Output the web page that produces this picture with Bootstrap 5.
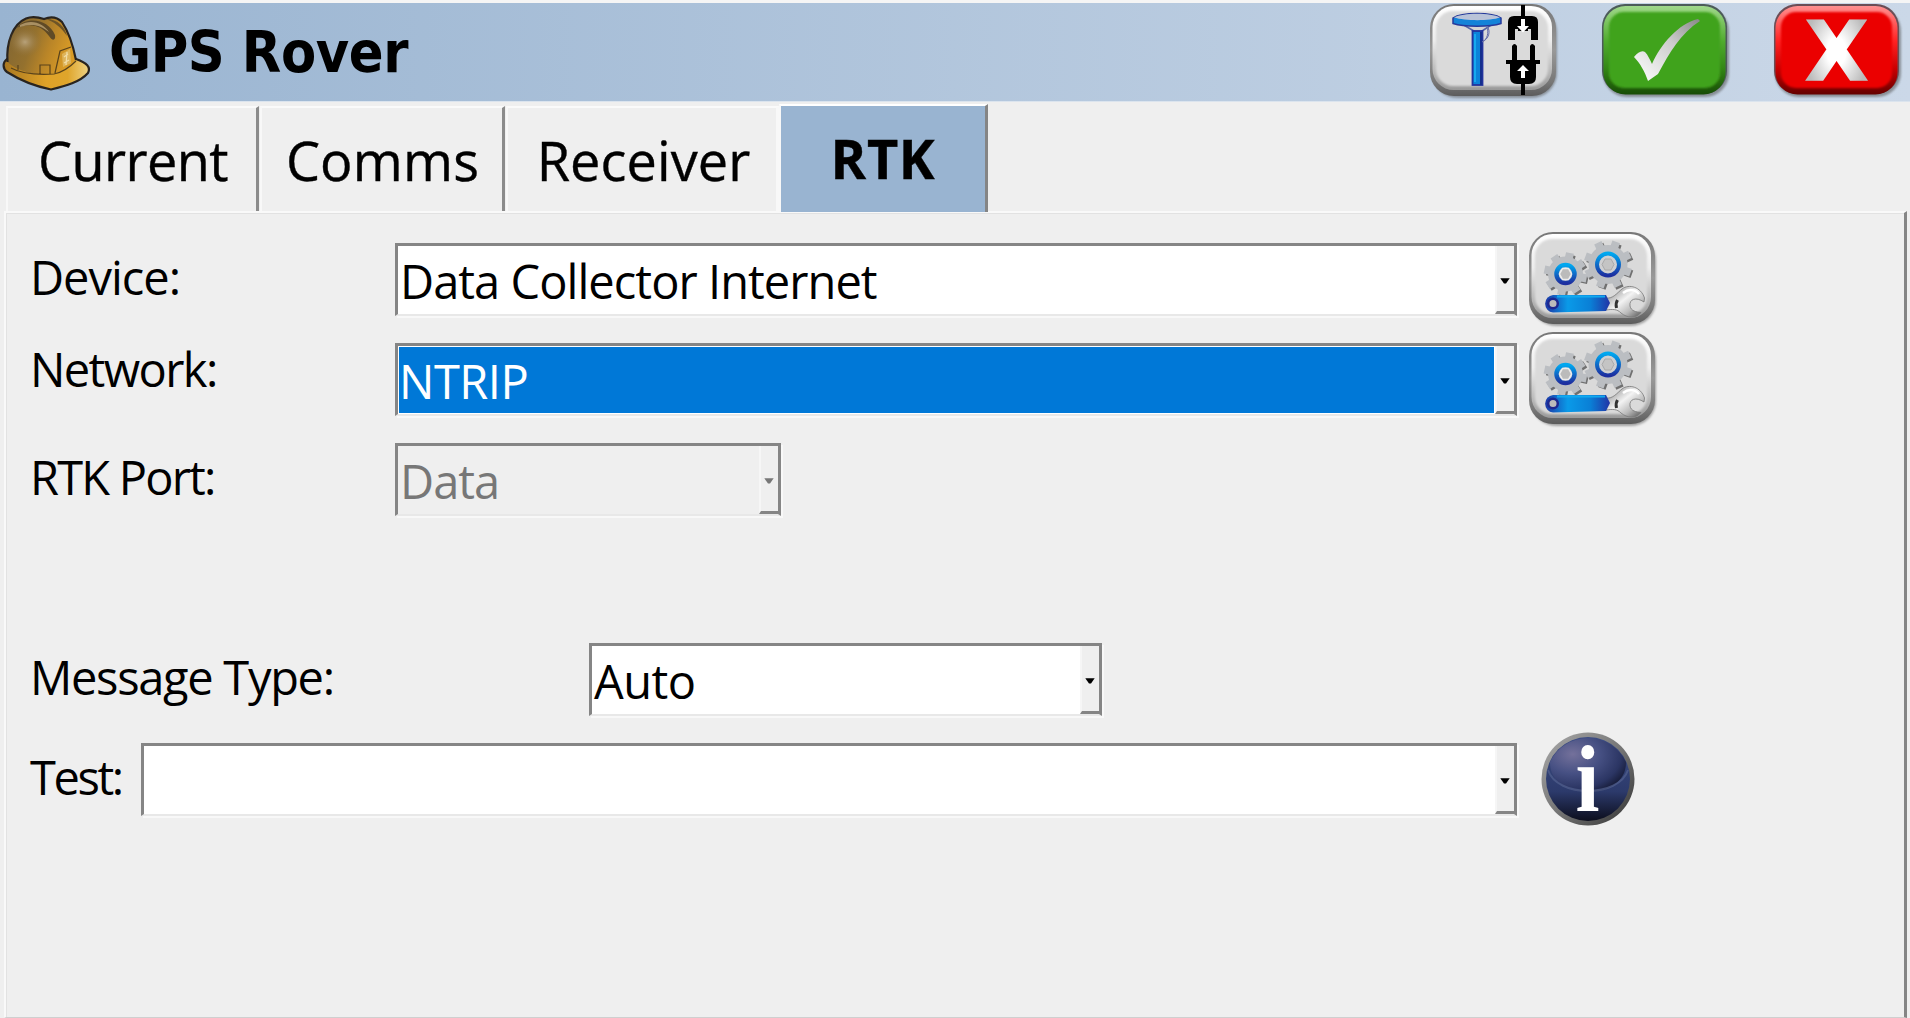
<!DOCTYPE html>
<html lang="en">
<head>
<meta charset="utf-8">
<title>GPS Rover</title>
<meta name="viewport" content="width=device-width, initial-scale=1">
<link href="https://cdn.jsdelivr.net/npm/bootstrap@5.3.0/dist/css/bootstrap.min.css" rel="stylesheet">
<style>
body{background:#efefef;color:#000;font-family:"Open Sans","Noto Sans",sans-serif;height:1018px;overflow:hidden;border-top:3px solid #f5f5f5}
svg{display:block;flex:none;overflow:visible}
.titlebar{height:98px;background:linear-gradient(90deg,#99b4d1,#cbd8e8);box-shadow:0 1px 0 #dbe4ee;padding:0 8px 0 0}
.titlebar h1{font:bold 57px/76px "DejaVu Sans Condensed","DejaVu Sans",sans-serif;font-stretch:condensed;margin:11px auto 0 16px;letter-spacing:-.4px}
.titlebar .btn,.fieldrow .btn{border:0;border-radius:24px}
.title-actions{gap:44px;margin-top:1px}
.tabstrip{height:110px;padding:5px 0 0 6px}
.tabstrip .nav-link{height:105px;margin-right:1px;padding:0;border:0;border-top:2px solid #fafafa;border-left:2px solid #f8f8f8;border-right:3px solid #8b8b8b;border-radius:0;color:#000;font-size:54px;line-height:104px;text-align:center;-webkit-text-stroke:.4px #000}
.tabstrip .flat{border-right-color:#f8f8f8;margin-right:0}
.tabstrip .nav-link.active{background:#99b4d1;font-weight:700;height:108px;margin-top:-2px;line-height:105px;border-right-color:#858585;border-top-color:#fff;letter-spacing:.7px}
.tabstrip .t1{width:253px;letter-spacing:-.6px;padding-left:2px}.tabstrip .t2{width:245px;letter-spacing:.2px;padding-left:1px}.tabstrip .t3{width:273px;letter-spacing:.1px;padding-left:3px}.t4{width:209px}
.panel{height:807px;margin:0 3px 0 4px;padding:16px 0 0 24px;border-top:2px solid #f9f9f9;border-left:2px solid #f9f9f9;border-right:3px solid #858585;border-bottom:1px solid #cfcfcf;box-shadow:inset 1px 1px #e2e2e2}
.fieldrow{height:100px}
.fieldrow label{font-size:47px;line-height:64px;margin-top:16px;white-space:nowrap;flex:none}
.fieldrow .raised{margin-top:8px}
.w-label{width:365px}.w-wide{width:559px}.w-short{width:111px}
.combo{height:73px;margin-top:14px;border:3px solid #858585;border-bottom:2px solid #e8e8e8;background:#fff;box-shadow:2px 2px 0 #f8f8f8;font-size:47px;line-height:71px;flex:none;white-space:nowrap}
.combo .val{flex:1 1 auto;padding-left:2px}
.combo .val.chosen{background:#0078d7;color:#fff;margin:1px;padding-left:0;line-height:69px;height:66px}
.combo .drop{width:19px;height:68px;flex:none;background:#efefef;border-left:2px solid #f6f6f6;border-bottom:3px solid #858585;padding:32px 0 0 3px}
.combo.off{background:#efefef;color:#777}
.c-full{width:1122px}.c-port{width:386px}.c-msg{width:513px}.c-test{width:1376px}
.ls-dev{letter-spacing:-1px}.ls-net{letter-spacing:-1.6px}.ls-port{letter-spacing:-1.8px}.ls-msg{letter-spacing:-1.3px}.ls-test{letter-spacing:-2.4px}
.ls-data{letter-spacing:-.95px}.ls-ntrip{letter-spacing:-.5px}
</style>
<script src="https://cdn.jsdelivr.net/npm/bootstrap@5.3.0/dist/js/bootstrap.bundle.min.js"></script>
</head>
<body>
<svg width="0" height="0" class="position-absolute" aria-hidden="true">
<defs>
<linearGradient id="rim" x1="0" y1="0" x2="0" y2="1"><stop offset="0" stop-color="#777"/><stop offset=".5" stop-color="#999"/><stop offset=".85" stop-color="#777"/><stop offset="1" stop-color="#5c5c5c"/></linearGradient>
<linearGradient id="hi" x1="0" y1="0" x2="0" y2="1"><stop offset="0" stop-color="#fff"/><stop offset=".4" stop-color="#eee"/><stop offset="1" stop-color="#999"/></linearGradient>
<linearGradient id="blue" x1="0" y1="0" x2="0" y2="1"><stop offset="0" stop-color="#00a8f0"/><stop offset="1" stop-color="#1d2fa0"/></linearGradient>
<linearGradient id="bar" x1="0" y1="0" x2="1" y2="0"><stop offset="0" stop-color="#1c36a5"/><stop offset=".35" stop-color="#0a9ae8"/><stop offset=".7" stop-color="#0a7fd6"/><stop offset="1" stop-color="#2134a6"/></linearGradient>
<linearGradient id="steel" x1="0" y1="0" x2="1" y2="1"><stop offset="0" stop-color="#777"/><stop offset=".45" stop-color="#f3f3f3"/><stop offset=".7" stop-color="#bbb"/><stop offset="1" stop-color="#444"/></linearGradient>
<filter id="b1" x="-20%" y="-20%" width="140%" height="140%"><feGaussianBlur stdDeviation="1.2"/></filter>
<symbol id="plate" viewBox="0 0 128 94" overflow="visible">
<rect x="2" y="3" width="125" height="91" rx="25" fill="#555" opacity=".5" filter="url(#b1)"/>
<rect x="0" y="0" width="126" height="92" rx="24" fill="url(#rim)"/>
<rect x="2.500" y="2" width="119.500" height="84" rx="21" fill="url(#hi)"/>
<rect x="6" y="7" width="112" height="75" rx="17" fill="#dadada" filter="url(#b1)"/>
</symbol>
<symbol id="tools" viewBox="0 0 128 94" overflow="visible">
<use href="#plate" width="128" height="94"/>
<g transform="translate(36.500 42)">
<g transform="translate(1.800 1.800) rotate(12)" stroke="#707070" stroke-width="8"><path d="M0-21V21M-21 0H21M-15-15L15 15M15-15L-15 15"/></g>
<path d="M0-21.500V21.500M-21.500 0H21.500M-15-15L15 15M15-15L-15 15" transform="rotate(12)" stroke="#bbbec2" stroke-width="8"/>
<circle r="17.500" fill="#bbbec2"/><circle r="9" fill="#d4d4d4" stroke="url(#blue)" stroke-width="4.500"/><path d="M-3-5.500H3L6 0L3 5.500H-3L-6 0Z" fill="#bbb" stroke="#ececec" stroke-width="1.500"/></g>
<g transform="translate(79 32.500)">
<g transform="translate(1.800 1.800) rotate(20)" stroke="#707070" stroke-width="8"><path d="M0-23.500V23.500M-23.500 0H23.500M-17-17L17 17M17-17L-17 17"/></g>
<path d="M0-24V24M-24 0H24M-17-17L17 17M17-17L-17 17" transform="rotate(20)" stroke="#bbbec2" stroke-width="8"/>
<circle r="19.500" fill="#bbbec2"/><circle r="11" fill="#cfd0d2" stroke="url(#blue)" stroke-width="4"/><path d="M-3-5.500H3L6 0L3 5.500H-3L-6 0Z" fill="#c4c4c4" stroke="#aaa"/></g>
<path d="M77 66C84 67 88 61 93 57C100 51.500 112 55 115.500 66L115 70C107 64.500 100 67 101 74C102 79 107 80 112 80.500C107 87 98 86 92 81C88 77 84 77 77 78Z" fill="url(#steel)" stroke="#777" stroke-width=".8"/>
<path d="M94 61C99 57 106 57 110 62" stroke="#fff" stroke-width="2.500" fill="none"/>
<path d="M88.500 68C86.500 71 87 74 87.500 76" stroke="#333" stroke-width="3" fill="none"/>
<path d="M24 63H77L81 71L77 79L24 80.500A8.800 8.800 0 0 1 24 63Z" fill="url(#bar)"/>
<path d="M28 64.500H76" stroke="#11a9ef" stroke-width="2"/>
<circle cx="24" cy="71.500" r="4.800" fill="#bbb" stroke="#1d2890" stroke-width="2.500"/>
</symbol>
<symbol id="caret" viewBox="0 0 10 6"><path d="M.3.200H9.700L6 5.500H4Z" fill="currentColor"/></symbol>
</defs>
</svg>

<header class="titlebar d-flex align-items-start">
<svg width="93" height="98" viewBox="0 3 93 98">
<defs><linearGradient id="shell" x1="0" y1="0" x2="1" y2=".3"><stop offset="0" stop-color="#7f6433"/><stop offset=".45" stop-color="#94712e"/><stop offset=".7" stop-color="#b98528"/><stop offset="1" stop-color="#d99b26"/></linearGradient><radialGradient id="glow"><stop offset="0" stop-color="#b8a27a"/><stop offset="1" stop-color="#8f7039" stop-opacity="0"/></radialGradient><linearGradient id="brim"><stop offset="0" stop-color="#a87720"/><stop offset=".5" stop-color="#dfa228"/><stop offset=".75" stop-color="#dfa52b"/><stop offset="1" stop-color="#efd384"/></linearGradient></defs>
<path d="M7 59C2 63 3 69 7 72C18 79 34 86 51 89.500C66 86 80 82 88 73C91 67 87 63 76 59Z" fill="url(#brim)" stroke="#29241f" stroke-width="2.200"/>
<path d="M7.500 62C6 42 13 24 26 18.500C32 16 38 17 44 19C51 16 57 17 62 22C68 31 73 45 76 60C70 67 62 71 54 74C36 76 18 72 7.500 62Z" fill="url(#shell)"/>
<path d="M7.500 62C6 42 13 24 26 18.500C32 16 38 17 44 19C51 16 57 17 62 22C68 31 73 45 76 60" fill="none" stroke="#29241f" stroke-width="2.200"/>
<ellipse cx="25" cy="42" rx="17" ry="15" fill="url(#glow)"/>
<path d="M16 28C28 15 49 20 55 35C56 41 52 41 49 36C42 26 32 22 16 28Z" fill="#5f4a26"/><path d="M20 25C32 18 44 24 49 32C40 25 32 23 20 27Z" fill="#a99063"/>
<path d="M46 19C58 19 65 27 67 36C60 26 54 22 46 19Z" fill="#6d5427"/>
<path d="M18 65V70M40 74V65H50V74M55 73L60 51L71 47M11 68C22 74 38 75 54 74C64 72 70 67 76 61" fill="none" stroke="#5a431b" stroke-width="1.200"/>
<path d="M62 54L70 49L71 63L63 67Z" fill="#deb45a"/><path d="M64 57L68 54M64 63L69 60M67 52L66 65" stroke="#f1dca4" stroke-width="1.300"/>
</svg>
<h1>GPS Rover</h1>
<div class="title-actions d-flex">
<button class="btn p-0" aria-label="Receiver connection">
<svg width="128" height="94" viewBox="0 0 128 94"><use href="#plate" width="128" height="94"/>
<path d="M25 16L44 27V33H52V27L69 16Z" fill="#d4d4d4" stroke="#5866a4" stroke-width="1.500"/>
<path d="M23 14C32 8 62 8 71 14V19.500C60 23 34 23 23 19.500Z" fill="#1483d8" stroke="#263a9b" stroke-width="1.500"/><path d="M24 13.500C34 8.500 60 8.500 70 13.500C60 17 35 17 24 13.500Z" fill="#b9c3d8"/>
<rect x="42.500" y="27" width="10" height="54" fill="#0b82d9" stroke="#22329c" stroke-width="1.800"/><path d="M51 28V81" stroke="#142f8e" stroke-width="2"/><path d="M45 30V78" stroke="#16a9ef" stroke-width="2"/>
<path d="M53 37C57 36 59 29 57 22C61 27 59 35 52 38" fill="#dce3f0" stroke="#626ba6"/>
<path d="M93 1V13M93 77V91" stroke="#000" stroke-width="4"/>
<path d="M78 36V18Q78 12 84 12H102Q108 12 108 18V36H101V25H98V36H88V25H85V36Z"/><path d="M87 27H99V37H87Z" fill="#dadada"/><path d="M91 15H95V22H99L93 28.500L87 22H91Z" fill="#fff"/>
<path d="M82 42Q84.500 38 87 42V56H100V42Q102 38 105 42V56H110V60H106V73Q106 80 99 80H87Q80 80 80 73V60H76V56H82Z"/><path d="M91 74V67H87L93 61L99 67H95V74Z" fill="#fff"/>
</svg></button>
<button class="btn p-0" aria-label="Accept">
<svg width="128" height="94" viewBox="0 0 128 94"><defs><linearGradient id="gr" x1="0" y1="0" x2="0" y2="1"><stop offset="0" stop-color="#a0d88b"/><stop offset=".4" stop-color="#50ab2e"/><stop offset=".7" stop-color="#348816"/><stop offset="1" stop-color="#174c06"/></linearGradient><linearGradient id="tick" x1="1" y1="0" x2="0" y2="1"><stop offset="0" stop-color="#888"/><stop offset=".4" stop-color="#ccc"/><stop offset="1" stop-color="#fff"/></linearGradient></defs>
<rect x="1" y="3" width="126" height="90" rx="24" fill="#555" opacity=".55" filter="url(#b1)"/><rect width="125" height="90" rx="23" fill="#4c5b59"/><rect x="1.500" y="2" width="122" height="88.500" rx="22" fill="url(#gr)"/><rect x="7" y="8" width="111" height="76" rx="15" fill="#41a31b" filter="url(#b1)"/>
<path d="M32 53C36 48 40 46 43 48C46 51 48 56 50 60C59 40 76 20 96 15L98 17C78 30 68 48 56 70L46 77C43 68 38 59 32 53Z" fill="url(#tick)"/></svg></button>
<button class="btn p-0" aria-label="Cancel">
<svg width="128" height="94" viewBox="0 0 128 94"><defs><linearGradient id="rd" x1="0" y1="0" x2="0" y2="1"><stop offset="0" stop-color="#ff9090"/><stop offset=".4" stop-color="#f22"/><stop offset=".7" stop-color="#c00"/><stop offset="1" stop-color="#640000"/></linearGradient><radialGradient id="xf"><stop offset=".3" stop-color="#fff"/><stop offset="1" stop-color="#bbb"/></radialGradient></defs>
<rect x="1" y="3" width="126" height="90" rx="24" fill="#555" opacity=".55" filter="url(#b1)"/><rect width="125" height="90" rx="23" fill="#6b4d55"/><rect x="1.500" y="2" width="122" height="88.500" rx="22" fill="url(#rd)"/><rect x="7" y="8" width="111" height="76" rx="15" fill="#eb0000" filter="url(#b1)"/>
<text x="62.500" y="76" text-anchor="middle" font-family="DejaVu Sans" font-weight="700" font-size="82" fill="url(#xf)" stroke="url(#xf)" stroke-width="1.500">X</text></svg></button>
</div>
</header>

<nav class="tabstrip nav flex-nowrap">
<a class="nav-link t1">Current</a><a class="nav-link t2">Comms</a><a class="nav-link flat t3">Receiver</a><a class="nav-link active t4">RTK</a>
</nav>

<main class="panel">
<div class="fieldrow d-flex align-items-start">
<label class="w-label ls-dev">Device:</label>
<div class="combo c-full d-flex"><span class="val ls-data">Data Collector Internet</span><span class="drop"><svg width="10" height="6"><use href="#caret"/></svg></span></div>
<button class="btn p-0 ms-2" aria-label="Device settings"><svg class="ms-1 mt-1" width="128" height="94"><use href="#tools" y="-1"/></svg></button>
</div>
<div class="fieldrow d-flex align-items-start">
<label class="w-label raised ls-net">Network:</label>
<div class="combo c-full d-flex"><span class="val chosen ls-ntrip">NTRIP</span><span class="drop"><svg width="10" height="6"><use href="#caret"/></svg></span></div>
<button class="btn p-0 ms-2" aria-label="Network settings"><svg class="ms-1 mt-1" width="128" height="94"><use href="#tools" y="-1"/></svg></button>
</div>
<div class="fieldrow d-flex align-items-start">
<label class="w-label ls-port">RTK Port:</label>
<div class="combo off c-port d-flex"><span class="val ls-data">Data</span><span class="drop"><svg width="10" height="6"><use href="#caret"/></svg></span></div>
</div>
<div class="fieldrow"></div>
<div class="fieldrow d-flex align-items-start">
<label class="w-wide ls-msg">Message Type:</label>
<div class="combo c-msg d-flex"><span class="val ls-ntrip">Auto</span><span class="drop"><svg width="10" height="6"><use href="#caret"/></svg></span></div>
</div>
<div class="fieldrow d-flex align-items-start">
<label class="w-short ls-test">Test:</label>
<div class="combo c-test d-flex"><span class="val"></span><span class="drop"><svg width="10" height="6"><use href="#caret"/></svg></span></div>
<button class="btn p-0 ms-4" aria-label="Information">
<svg class="mt-1" width="94" height="94" viewBox="0 1 94 94"><defs><radialGradient id="orb" cx=".3" cy=".3" r=".8"><stop offset="0" stop-color="#74719b"/><stop offset=".45" stop-color="#465083"/><stop offset=".8" stop-color="#2b3563"/><stop offset="1" stop-color="#151a35"/></radialGradient><linearGradient id="ring" x1="0" y1="0" x2="1" y2="1"><stop offset="0" stop-color="#aaa"/><stop offset=".5" stop-color="#777"/><stop offset="1" stop-color="#333"/></linearGradient><linearGradient id="low" x1="0" y1="0" x2="0" y2="1"><stop offset="0" stop-color="#3c4d84"/><stop offset=".65" stop-color="#2c3a6b"/><stop offset="1" stop-color="#0c0e1d"/></linearGradient></defs>
<circle cx="47" cy="47" r="46.500" fill="url(#ring)"/><circle cx="47" cy="47" r="42" fill="url(#low)"/><path d="M9 30A42 42 0 0 1 85 30C86 70 8 70 9 30Z" fill="url(#orb)"/><path d="M7 38C16 66 78 66 87 38" fill="none" stroke="#53618f" stroke-width="2" opacity=".7"/>
<text x="46.500" y="79" text-anchor="middle" font-family="Liberation Serif" font-weight="700" font-size="95" textLength="24" lengthAdjust="spacingAndGlyphs" fill="#fff">i</text></svg></button>
</div>
</main>
</body>
</html>
